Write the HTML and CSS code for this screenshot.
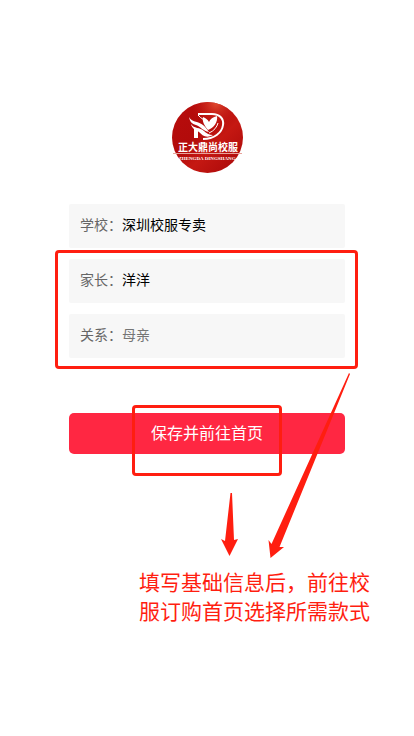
FILE: index.html
```html
<!DOCTYPE html>
<html lang="zh-CN">
<head>
    <meta charset="UTF-8">
    <meta name="viewport" content="width=device-width, initial-scale=1.0">
    <title>完善信息</title>
    <link rel="stylesheet" href="styles.css">
</head>
<body>
    <div class="container">
        <svg class="logo" viewBox="0 0 71 71" role="img" aria-label="正大鼎尚校服">
            <defs>
                <linearGradient id="logoRed" x1="0" y1="0" x2="1" y2="1">
                    <stop offset="0" stop-color="#b80d0c"/>
                    <stop offset="0.4" stop-color="#b20b0b"/>
                    <stop offset="0.6" stop-color="#c51812"/>
                    <stop offset="1" stop-color="#a60608"/>
                </linearGradient>
                <radialGradient id="logoGlow" cx="0.62" cy="0.02" r="0.35">
                    <stop offset="0" stop-color="#e04a30"/>
                    <stop offset="1" stop-color="#c81812" stop-opacity="0"/>
                </radialGradient>
            </defs>
            <circle cx="35.5" cy="35.5" r="35.5" fill="url(#logoRed)"/>
            <circle cx="35.5" cy="35.5" r="35.5" fill="url(#logoGlow)"/>
            <!-- D ring and stem -->
            <path d="M26 12H40C48 12 52 17 51 23C50 31 42 37 31 37" fill="none" stroke="#fff" stroke-width="2"/>
            <path d="M26 28V36H22V26Z" fill="#fff"/>
            <!-- wing -->
            <path d="M17 15C19 20 26 19 31 23C34 25 35 28 37 30C31 29 29 25 24 23C20 22 18 20 17 15Z" fill="#fff"/>
            <path d="M19 22C22 27 28 25 32 29C34 31 37 33 41 33C34 37 30 33 27 30C24 28 20 27 19 22Z" fill="#fff"/>
            <path d="M26 13C29 17 34 18 36 22" fill="none" stroke="#fff" stroke-width="1"/>
            <!-- leaves -->
            <path d="M36 28C32 23 30 19 31 15C34 16 36 18 37 20C38 17 41 15 45 14C46 20 42 26 36 28Z" fill="#fff"/>
            <path d="M37 31C42 29 45 25 46 21" fill="none" stroke="#fff" stroke-width="1"/>
            <text class="logo-name" x="36" y="49" text-anchor="middle">正大鼎尚校服</text>
            <path d="M1 51.5H70" stroke="#e8a39b" stroke-width="1"/>
            <text class="logo-latin" x="35" y="58" text-anchor="middle">ZHENGDA DINGSHANG</text>
        </svg>

        <form class="info-form">
            <div class="form-group">
                <label for="school">学校：</label>
                <input type="text" id="school" value="深圳校服专卖">
            </div>
            <div class="marked-fields">
                <div class="form-group">
                    <label for="parent">家长：</label>
                    <input type="text" id="parent" value="洋洋">
                </div>
                <div class="form-group">
                    <label for="relation">关系：</label>
                    <input type="text" id="relation" placeholder="母亲">
                </div>
            </div>
            <div class="submit-row">
                <button type="button">保存并前往首页</button>
            </div>
        </form>

        <p class="guide-text">填写基础信息后，前往校服订购首页选择所需款式</p>

        <!-- Guide arrows -->
        <svg class="arrows" viewBox="0 0 140 190" aria-hidden="true">
            <path d="M10.500 121H12L14 168L18 167L9.500 184L1 167L5 169Z"/>
            <path d="M129 1L130 2L59.500 175L64 175L50.500 186L48.500 168L51.500 172Z"/>
        </svg>
    </div>
</body>
</html>
```

FILE: styles.css
```css
body {
    font-family: "Noto Sans CJK SC", sans-serif;
    background-color: #fff;
    color: #000;
    margin: 0;
}
.container {
    position: relative;
    max-width: 276px;
    margin: 0 auto;
    padding: 102px 20px 40px;
}
.logo {
    display: block;
    width: 71px;
    height: 71px;
    margin: 0 auto 31px;
}
.logo-name {
    font-size: 10px;
    font-weight: bold;
    fill: #fff;
}
.logo-latin {
    font-family: "Liberation Serif", serif;
    font-size: 5px;
    font-weight: bold;
    fill: #fff;
}
.info-form,
.marked-fields {
    display: flex;
    flex-direction: column;
    gap: 11px;
}
.form-group {
    display: flex;
    align-items: center;
    height: 44px;
    padding: 0 11px 4px;
    box-sizing: border-box;
    background: #f7f7f7;
    border-radius: 2px;
    font-size: 14px;
    line-height: 20px;
}
label {
    color: #666;
}
input {
    flex: 1;
    min-width: 0;
    padding: 0;
    border: none;
    outline: none;
    background: none;
    color: #000;
    font: inherit;
}
input::placeholder {
    color: #757575;
}
.marked-fields,
.submit-row {
    position: relative;
}
.marked-fields::after,
.submit-row::after {
    content: "";
    position: absolute;
    border: 3px solid #ff1e10;
    border-radius: 4px;
    pointer-events: none;
}
.marked-fields::after {
    inset: -9px -13px -11px -14px;
}
.submit-row {
    margin-top: 44px;
}
.submit-row::after {
    inset: -8px 63px -22px;
}
button {
    display: block;
    width: 100%;
    height: 41px;
    padding: 0 0 4px;
    border: none;
    border-radius: 5px;
    background: #ff2742;
    color: #fff;
    font: inherit;
    font-size: 16px;
    line-height: 24px;
}
.guide-text {
    width: 231px;
    margin: 113px -25px 0 auto;
    color: #ff1e10;
    font-size: 21px;
    line-height: 29px;
}
.arrows {
    position: absolute;
    top: 372px;
    right: 5px;
    width: 140px;
    height: 190px;
    fill: #ff1e10;
    pointer-events: none;
}
```
